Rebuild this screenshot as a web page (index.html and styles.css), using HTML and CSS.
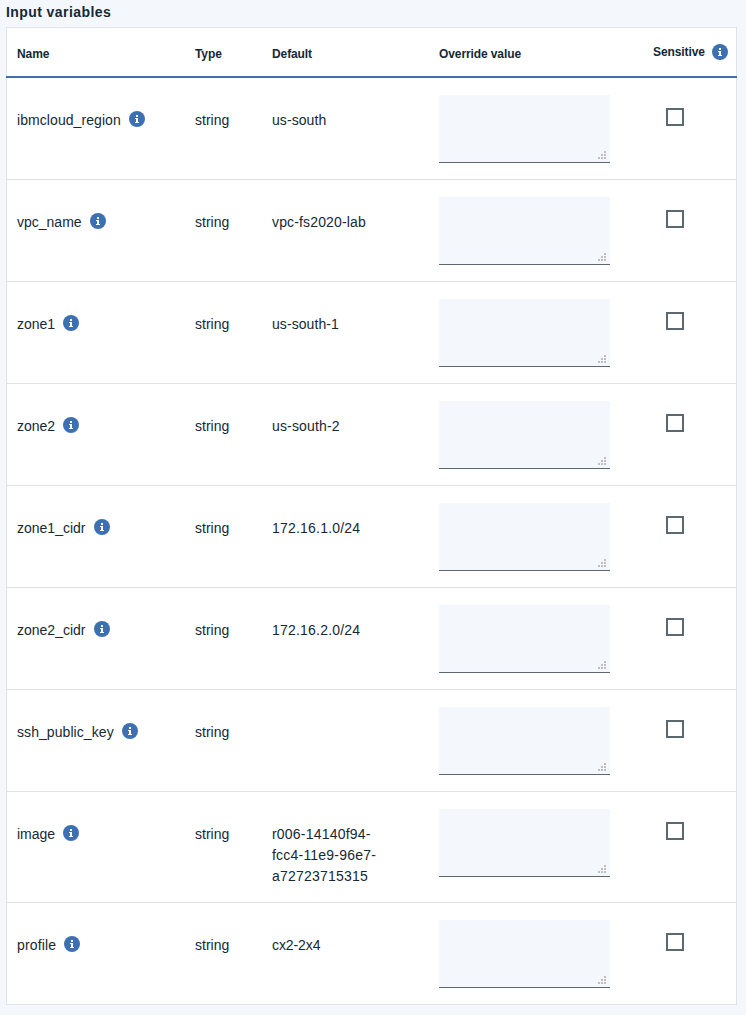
FILE: index.html
```html
<!DOCTYPE html>
<html lang="en">
<head>
<meta charset="utf-8">
<title>Input variables</title>
<link rel="stylesheet" href="styles.css">
</head>
<body>
<svg class="defs" width="0" height="0" aria-hidden="true">
  <symbol id="info" viewBox="0 0 16 16"><circle cx="8" cy="8" r="8" fill="#3d70b2"/><path d="M7 4h2v2H7zM6 7h3v4h1v1H6v-1h1V8H6z" fill="#fff"/></symbol>
  <symbol id="grip" viewBox="0 0 8 8"><path d="M6 0h2v2H6zM3 3h2v2H3zM6 3h2v2H6zM0 6h2v2H0zM3 6h2v2H3zM6 6h2v2H6z" fill="#bfbfbf"/></symbol>
</svg>
<h1 class="title">Input variables</h1>
<main class="table">
  <div class="head grid"><span>Name</span><span>Type</span><span>Default</span><span>Override value</span><span class="sensitive">Sensitive<svg class="info"><use href="#info"/></svg></span></div>
  <div class="row grid"><div class="name spaced">ibmcloud_region<svg class="info"><use href="#info"/></svg></div><div class="text">string</div><div class="text spaced">us-south</div><div class="field"><svg class="grip"><use href="#grip"/></svg></div><div class="check"></div></div>
  <div class="row grid"><div class="name">vpc_name<svg class="info"><use href="#info"/></svg></div><div class="text">string</div><div class="text wide">vpc-fs2020-lab</div><div class="field"><svg class="grip"><use href="#grip"/></svg></div><div class="check"></div></div>
  <div class="row grid"><div class="name">zone1<svg class="info"><use href="#info"/></svg></div><div class="text">string</div><div class="text spaced">us-south-1</div><div class="field"><svg class="grip"><use href="#grip"/></svg></div><div class="check"></div></div>
  <div class="row grid"><div class="name">zone2<svg class="info"><use href="#info"/></svg></div><div class="text">string</div><div class="text wide">us-south-2</div><div class="field"><svg class="grip"><use href="#grip"/></svg></div><div class="check"></div></div>
  <div class="row grid"><div class="name">zone1_cidr<svg class="info"><use href="#info"/></svg></div><div class="text">string</div><div class="text digits">172.16.1.0/24</div><div class="field"><svg class="grip"><use href="#grip"/></svg></div><div class="check"></div></div>
  <div class="row grid"><div class="name">zone2_cidr<svg class="info"><use href="#info"/></svg></div><div class="text">string</div><div class="text digits">172.16.2.0/24</div><div class="field"><svg class="grip"><use href="#grip"/></svg></div><div class="check"></div></div>
  <div class="row grid"><div class="name spaced">ssh_public_key<svg class="info"><use href="#info"/></svg></div><div class="text">string</div><div class="text"></div><div class="field"><svg class="grip"><use href="#grip"/></svg></div><div class="check"></div></div>
  <div class="row grid tall"><div class="name">image<svg class="info"><use href="#info"/></svg></div><div class="text">string</div><div class="text digits">r006-14140f94-<br>fcc4-11e9-96e7-<br>a72723715315</div><div class="field"><svg class="grip"><use href="#grip"/></svg></div><div class="check"></div></div>
  <div class="row grid"><div class="name wide">profile<svg class="info"><use href="#info"/></svg></div><div class="text">string</div><div class="text tight">cx2-2x4</div><div class="field"><svg class="grip"><use href="#grip"/></svg></div><div class="check"></div></div>
</main>
</body>
</html>
```

FILE: styles.css
```css
* { box-sizing: border-box; }
body {
  margin: 0;
  padding: 0 9px 10px 6px;
  background: #f4f7fb;
  color: #152935;
  font: 14px/21px "Liberation Sans", Arial, sans-serif;
}
.defs { display: block; }
.title {
  margin: 0;
  height: 27px;
  font-size: 14px;
  line-height: 24px;
  letter-spacing: 0.42px;
}
.table {
  background: #fff;
  border: 1px solid #dfe3e6;
  border-bottom: 0;
}
.grid {
  display: grid;
  grid-template-columns: 178px 77px 167px 214px 1fr;
  padding-left: 10px;
}
.head {
  height: 50px;
  margin: 0 -1px;
  padding-left: 11px;
  border-bottom: 2px solid #3d70b2;
  font-size: 12px;
  font-weight: 700;
  line-height: 52px;
  letter-spacing: -0.1px;
}
.sensitive {
  display: flex;
  align-items: center;
  height: 48px;
  line-height: 16px;
}
.row {
  height: 102px;
  border-bottom: 1px solid #dfe3e6;
}
.tall { height: 111px; }
.name {
  display: flex;
  align-self: start;
  padding-top: 32px;
}
.text { padding-top: 32px; }
.spaced { letter-spacing: 0.07px; }
.wide { letter-spacing: 0.15px; }
.digits { letter-spacing: 0.21px; }
.tight { letter-spacing: -0.1px; }
.info {
  flex: none;
  width: 16px;
  height: 16px;
  margin: 1px 0 0 8px;
}
.sensitive .info { margin: 0 0 0 7px; }
.field {
  display: flex;
  align-items: flex-end;
  justify-content: flex-end;
  width: 171px;
  height: 68px;
  margin-top: 17px;
  padding: 0 4px 3px 0;
  background: #f4f7fb;
  border-bottom: 1px solid #5a6872;
}
.grip { width: 8px; height: 8px; }
.check {
  width: 18px;
  height: 18px;
  margin: 30px 0 0 13px;
  border: 2px solid #5a6872;
}
```
